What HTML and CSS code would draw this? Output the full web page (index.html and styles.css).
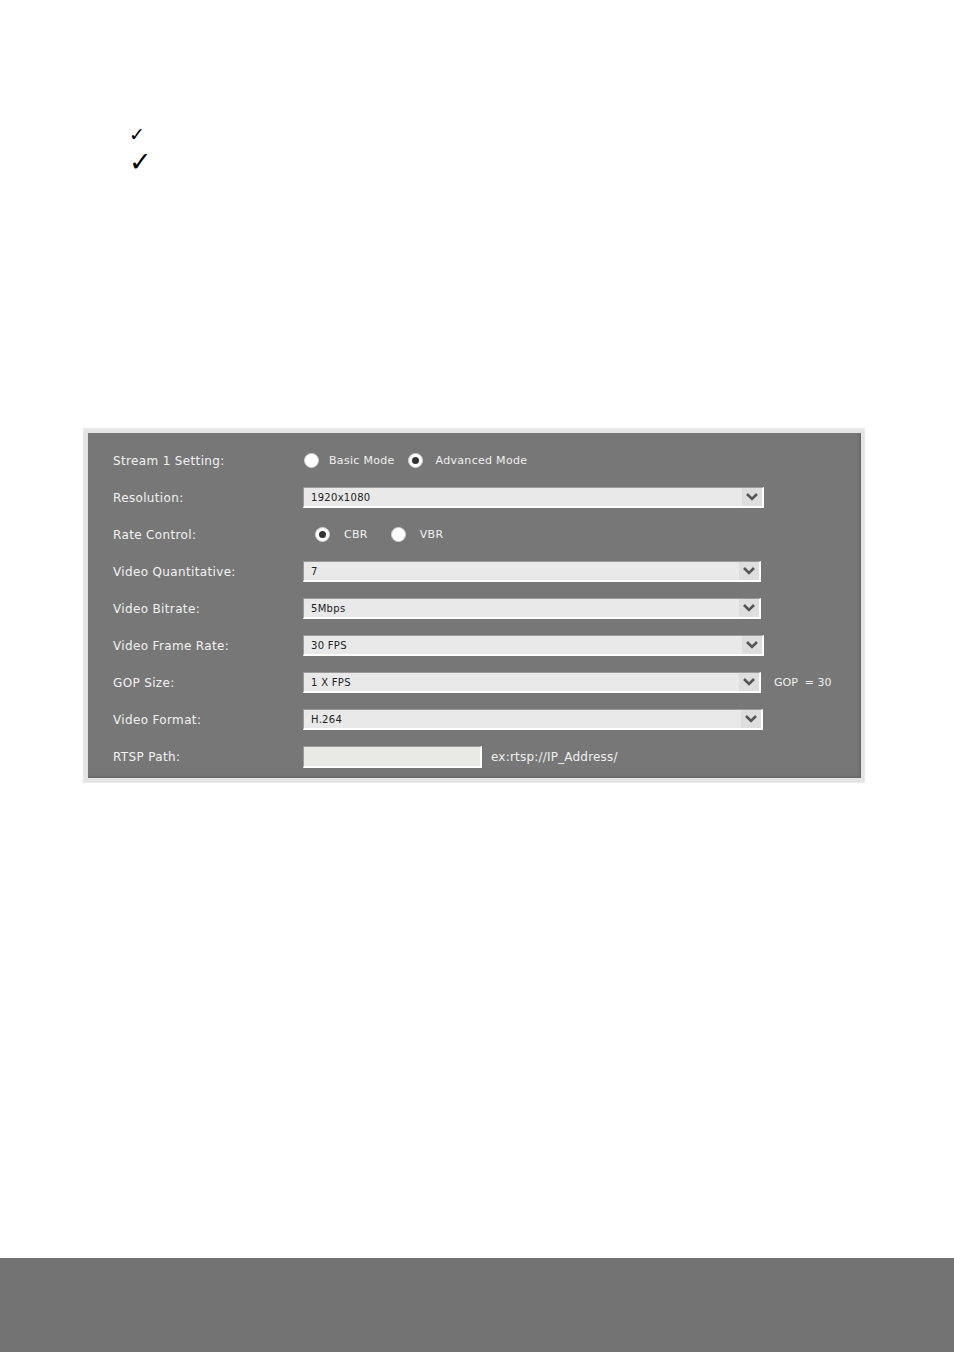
FILE: index.html
```html
<!DOCTYPE html>
<html>
<head>
<meta charset="utf-8">
<link rel="stylesheet" href="styles.css">
</head>
<body>
<div class="page">
  <ul class="checks">
    <li class="chk chk-small">✓</li>
    <li class="chk chk-big">✓</li>
  </ul>

  <div class="frame">
    <div class="panel">
      <div class="row">
        <div class="label">Stream 1 Setting:</div>
        <div class="ctrl radios">
          <span class="radio"></span><span class="rlabel">Basic Mode</span>
          <span class="radio on"></span><span class="rlabel adv">Advanced Mode</span>
        </div>
      </div>
      <div class="row">
        <div class="label">Resolution:</div>
        <div class="ctrl"><div class="select w460"><span class="val">1920x1080</span><span class="arrow"><svg width="14" height="10" viewBox="0 0 14 10"><polyline points="2,2 7,7 12,2" fill="none" stroke="#555" stroke-width="2.6"/></svg></span></div></div>
      </div>
      <div class="row">
        <div class="label">Rate Control:</div>
        <div class="ctrl radios rc">
          <span class="radio on"></span><span class="rlabel">CBR</span>
          <span class="radio"></span><span class="rlabel">VBR</span>
        </div>
      </div>
      <div class="row">
        <div class="label">Video Quantitative:</div>
        <div class="ctrl"><div class="select w457"><span class="val">7</span><span class="arrow"><svg width="14" height="10" viewBox="0 0 14 10"><polyline points="2,2 7,7 12,2" fill="none" stroke="#555" stroke-width="2.6"/></svg></span></div></div>
      </div>
      <div class="row">
        <div class="label">Video Bitrate:</div>
        <div class="ctrl"><div class="select w457"><span class="val">5Mbps</span><span class="arrow"><svg width="14" height="10" viewBox="0 0 14 10"><polyline points="2,2 7,7 12,2" fill="none" stroke="#555" stroke-width="2.6"/></svg></span></div></div>
      </div>
      <div class="row">
        <div class="label">Video Frame Rate:</div>
        <div class="ctrl"><div class="select w460"><span class="val">30 FPS</span><span class="arrow"><svg width="14" height="10" viewBox="0 0 14 10"><polyline points="2,2 7,7 12,2" fill="none" stroke="#555" stroke-width="2.6"/></svg></span></div></div>
      </div>
      <div class="row">
        <div class="label">GOP Size:</div>
        <div class="ctrl"><div class="select w457"><span class="val">1 X FPS</span><span class="arrow"><svg width="14" height="10" viewBox="0 0 14 10"><polyline points="2,2 7,7 12,2" fill="none" stroke="#555" stroke-width="2.6"/></svg></span></div><span class="note gop">GOP&nbsp;&nbsp;=&nbsp;30</span></div>
      </div>
      <div class="row">
        <div class="label">Video Format:</div>
        <div class="ctrl"><div class="select w459"><span class="val">H.264</span><span class="arrow"><svg width="14" height="10" viewBox="0 0 14 10"><polyline points="2,2 7,7 12,2" fill="none" stroke="#555" stroke-width="2.6"/></svg></span></div></div>
      </div>
      <div class="row">
        <div class="label">RTSP Path:</div>
        <div class="ctrl"><div class="input"></div><span class="note path">ex:rtsp://IP_Address/</span></div>
      </div>
    </div>
  </div>

  <div class="footer"></div>
</div>
</body>
</html>
```

FILE: styles.css
```css
html, body {
  margin: 0;
  padding: 0;
  background: #ffffff;
}

.page {
  width: 954px;
  height: 1352px;
  display: flex;
  flex-direction: column;
  font-family: "DejaVu Sans", Verdana, sans-serif;
}

.checks {
  list-style: none;
  margin: 125px 0 0 0;
  padding: 0 0 0 129px;
  font-family: "DejaVu Sans", sans-serif;
  color: #000;
}

.chk {
  line-height: 1;
}

.chk-small {
  font-size: 19px;
  height: 23px;
}

.chk-big {
  font-size: 27px;
  height: 32px;
}

.frame {
  margin: 248px 0 0 83px;
  width: 782px;
  height: 355px;
  box-sizing: border-box;
  padding: 5px 4px 5px 5px;
  background: #e4e4e4;
  box-shadow: inset 0 0 2px #f6f6f6;
}

.panel {
  height: 100%;
  box-sizing: border-box;
  background: #777777;
  padding: 9px 0 0 25px;
  box-shadow: inset -2px -2px 2px #6a6a6a;
}

.row {
  display: flex;
  align-items: center;
  height: 37px;
}

.label {
  width: 190px;
  color: #f2f2f2;
  font-size: 12px;
  letter-spacing: 0.35px;
}

.ctrl {
  display: flex;
  align-items: center;
}

.radios {
  color: #f0f0f0;
  font-size: 11px;
  letter-spacing: 0.3px;
}

.radio {
  width: 13px;
  height: 13px;
  border-radius: 50%;
  background: #ffffff;
  border: 1px solid #d0d0d0;
  box-sizing: content-box;
  margin-left: 1px;
  position: relative;
}

.radio.on::after {
  content: "";
  position: absolute;
  left: 3px;
  top: 3px;
  width: 7px;
  height: 7px;
  border-radius: 50%;
  background: #333;
}

.rlabel {
  margin-left: 10px;
  margin-right: 12px;
}

.rlabel.adv {
  margin-left: 13px;
}

.rc {
  padding-left: 11px;
}

.rc .rlabel {
  margin-left: 14px;
  margin-right: 22px;
}

.select {
  height: 21px;
  box-sizing: border-box;
  background: #e9e9e9;
  border-top: 1px solid #9a9a9a;
  border-left: 1px solid #9a9a9a;
  border-right: 2px solid #ffffff;
  border-bottom: 2px solid #ffffff;
  display: flex;
  align-items: center;
  justify-content: space-between;
}

.w460 { width: 461px; }
.w457 { width: 458px; }
.w459 { width: 460px; }

.val {
  font-size: 10px;
  color: #222;
  padding-left: 7px;
  letter-spacing: 0.3px;
}

.arrow {
  width: 20px;
  height: 18px;
  background: #dedede;
  display: flex;
  align-items: center;
  justify-content: center;
}

.note {
  color: #f0f0f0;
  font-size: 11px;
}

.gop {
  margin-left: 13px;
}

.input {
  width: 179px;
  height: 22px;
  box-sizing: border-box;
  background: #e9e9e6;
  border-top: 1px solid #9a9a9a;
  border-left: 1px solid #9a9a9a;
  border-right: 2px solid #ffffff;
  border-bottom: 2px solid #ffffff;
}

.path {
  margin-left: 9px;
  font-size: 12px;
  letter-spacing: 0.2px;
}

.footer {
  margin-top: auto;
  height: 94px;
  background: #737373;
}
```
